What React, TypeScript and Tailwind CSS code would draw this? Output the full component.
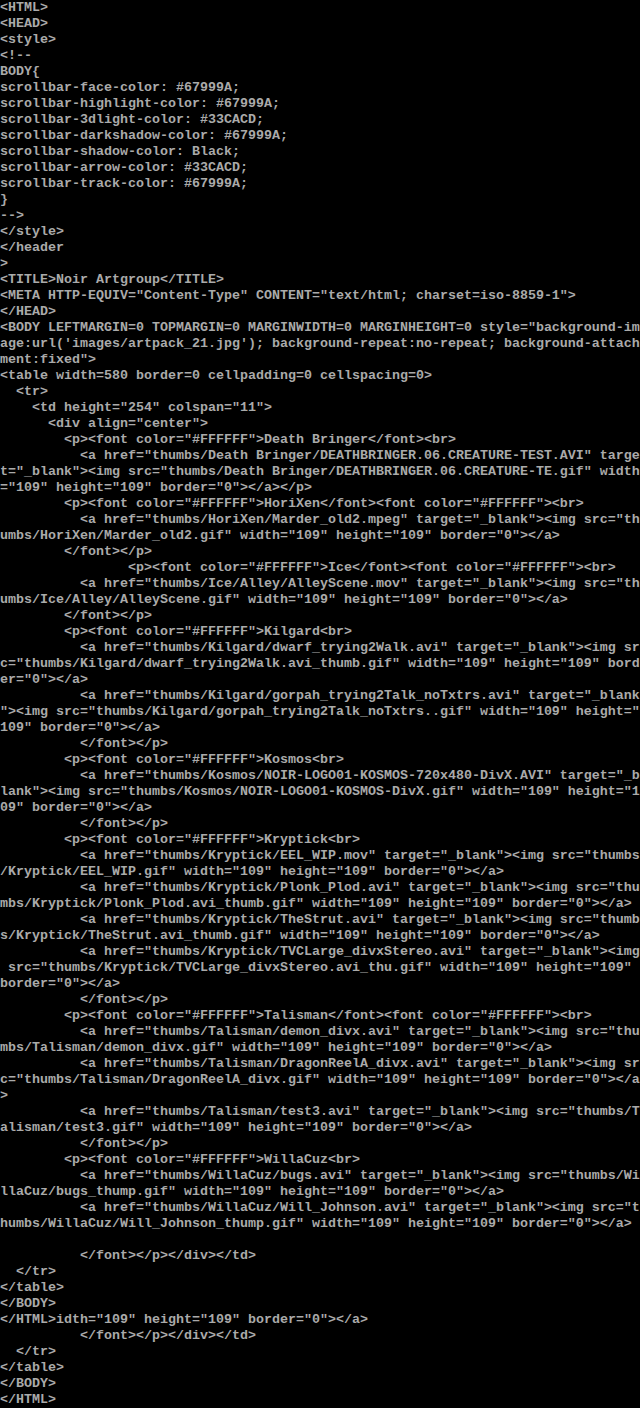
const lines: string[] = [
  `<HTML>`,
  `<HEAD>`,
  `<style>`,
  `<!--`,
  `BODY{`,
  `scrollbar-face-color: #67999A;`,
  `scrollbar-highlight-color: #67999A;`,
  `scrollbar-3dlight-color: #33CACD;`,
  `scrollbar-darkshadow-color: #67999A;`,
  `scrollbar-shadow-color: Black;`,
  `scrollbar-arrow-color: #33CACD;`,
  `scrollbar-track-color: #67999A;`,
  `}`,
  `-->`,
  `</style>`,
  `</header`,
  `>`,
  `<TITLE>Noir Artgroup</TITLE>`,
  `<META HTTP-EQUIV="Content-Type" CONTENT="text/html; charset=iso-8859-1">`,
  `</HEAD>`,
  `<BODY LEFTMARGIN=0 TOPMARGIN=0 MARGINWIDTH=0 MARGINHEIGHT=0 style="background-im`,
  `age:url('images/artpack_21.jpg'); background-repeat:no-repeat; background-attach`,
  `ment:fixed">`,
  `<table width=580 border=0 cellpadding=0 cellspacing=0>`,
  `  <tr>`,
  `    <td height="254" colspan="11">`,
  `      <div align="center">`,
  `        <p><font color="#FFFFFF">Death Bringer</font><br>`,
  `          <a href="thumbs/Death Bringer/DEATHBRINGER.06.CREATURE-TEST.AVI" targe`,
  `t="_blank"><img src="thumbs/Death Bringer/DEATHBRINGER.06.CREATURE-TE.gif" width`,
  `="109" height="109" border="0"></a></p>`,
  `        <p><font color="#FFFFFF">HoriXen</font><font color="#FFFFFF"><br>`,
  `          <a href="thumbs/HoriXen/Marder_old2.mpeg" target="_blank"><img src="th`,
  `umbs/HoriXen/Marder_old2.gif" width="109" height="109" border="0"></a>`,
  `        </font></p>`,
  `                <p><font color="#FFFFFF">Ice</font><font color="#FFFFFF"><br>`,
  `          <a href="thumbs/Ice/Alley/AlleyScene.mov" target="_blank"><img src="th`,
  `umbs/Ice/Alley/AlleyScene.gif" width="109" height="109" border="0"></a>`,
  `        </font></p>`,
  `        <p><font color="#FFFFFF">Kilgard<br>`,
  `          <a href="thumbs/Kilgard/dwarf_trying2Walk.avi" target="_blank"><img sr`,
  `c="thumbs/Kilgard/dwarf_trying2Walk.avi_thumb.gif" width="109" height="109" bord`,
  `er="0"></a>`,
  `          <a href="thumbs/Kilgard/gorpah_trying2Talk_noTxtrs.avi" target="_blank`,
  `"><img src="thumbs/Kilgard/gorpah_trying2Talk_noTxtrs..gif" width="109" height="`,
  `109" border="0"></a>`,
  `          </font></p>`,
  `        <p><font color="#FFFFFF">Kosmos<br>`,
  `          <a href="thumbs/Kosmos/NOIR-LOGO01-KOSMOS-720x480-DivX.AVI" target="_b`,
  `lank"><img src="thumbs/Kosmos/NOIR-LOGO01-KOSMOS-DivX.gif" width="109" height="1`,
  `09" border="0"></a>`,
  `          </font></p>`,
  `        <p><font color="#FFFFFF">Kryptick<br>`,
  `          <a href="thumbs/Kryptick/EEL_WIP.mov" target="_blank"><img src="thumbs`,
  `/Kryptick/EEL_WIP.gif" width="109" height="109" border="0"></a>`,
  `          <a href="thumbs/Kryptick/Plonk_Plod.avi" target="_blank"><img src="thu`,
  `mbs/Kryptick/Plonk_Plod.avi_thumb.gif" width="109" height="109" border="0"></a>`,
  `          <a href="thumbs/Kryptick/TheStrut.avi" target="_blank"><img src="thumb`,
  `s/Kryptick/TheStrut.avi_thumb.gif" width="109" height="109" border="0"></a>`,
  `          <a href="thumbs/Kryptick/TVCLarge_divxStereo.avi" target="_blank"><img`,
  ` src="thumbs/Kryptick/TVCLarge_divxStereo.avi_thu.gif" width="109" height="109" `,
  `border="0"></a>`,
  `          </font></p>`,
  `        <p><font color="#FFFFFF">Talisman</font><font color="#FFFFFF"><br>`,
  `          <a href="thumbs/Talisman/demon_divx.avi" target="_blank"><img src="thu`,
  `mbs/Talisman/demon_divx.gif" width="109" height="109" border="0"></a>`,
  `          <a href="thumbs/Talisman/DragonReelA_divx.avi" target="_blank"><img sr`,
  `c="thumbs/Talisman/DragonReelA_divx.gif" width="109" height="109" border="0"></a`,
  `>`,
  `          <a href="thumbs/Talisman/test3.avi" target="_blank"><img src="thumbs/T`,
  `alisman/test3.gif" width="109" height="109" border="0"></a>`,
  `          </font></p>`,
  `        <p><font color="#FFFFFF">WillaCuz<br>`,
  `          <a href="thumbs/WillaCuz/bugs.avi" target="_blank"><img src="thumbs/Wi`,
  `llaCuz/bugs_thump.gif" width="109" height="109" border="0"></a>`,
  `          <a href="thumbs/WillaCuz/Will_Johnson.avi" target="_blank"><img src="t`,
  `humbs/WillaCuz/Will_Johnson_thump.gif" width="109" height="109" border="0"></a>`,
  ``,
  `          </font></p></div></td>`,
  `  </tr>`,
  `</table>`,
  `</BODY>`,
  `</HTML>idth="109" height="109" border="0"></a>`,
  `          </font></p></div></td>`,
  `  </tr>`,
  `</table>`,
  `</BODY>`,
  `</HTML>`,
];

export default function App() {
  return (
    <div className="w-[640px] min-h-[1408px] bg-black overflow-hidden">
      <div className="flex flex-col font-['Liberation_Mono',monospace] text-[13.333px] font-bold leading-[16px] text-[#aaaaaa]">
        {lines.map((line, i) => (
          <div key={i} className="h-[16px] whitespace-pre">
            {line}
          </div>
        ))}
      </div>
    </div>
  );
}
